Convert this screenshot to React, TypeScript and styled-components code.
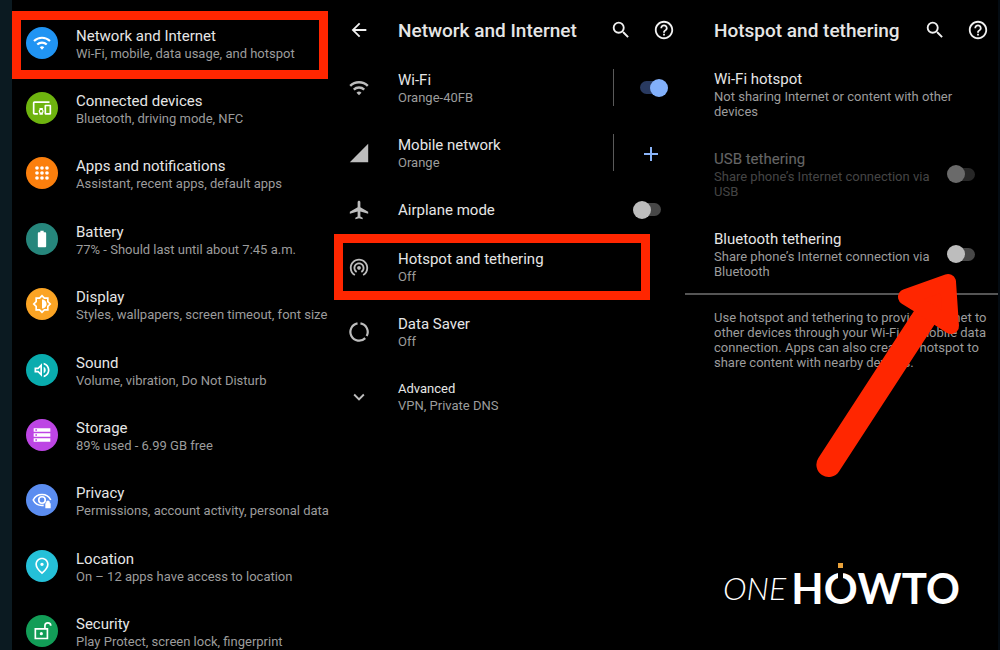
import React from "react";
import styled, { createGlobalStyle, css } from "styled-components";
import {
  MdAdd,
  MdArrowBack,
  MdBatteryFull,
  MdHelpOutline,
  MdKeyboardArrowDown,
  MdLocalAirport,
  MdOutlineBrightness6,
  MdOutlineDevicesOther,
  MdOutlinePlace,
  MdOutlineVolumeUp,
  MdSearch,
  MdSignalCellular4Bar,
  MdStorage,
  MdWifiTethering,
} from "react-icons/md";

const red = "#ff2600";

const GlobalStyle = createGlobalStyle`
  *, *::before, *::after { box-sizing: border-box; }
  body {
    margin: 0;
    background: #000;
    color: #e6e6e6;
    font-family: Roboto, "Liberation Sans", sans-serif;
  }
  h1, h2, p, ul { margin: 0; padding: 0; }
  ul { list-style: none; }
`;

const Page = styled.main`
  display: grid;
  grid-template-columns: 334fr 351fr 315fr;
  height: 100vh;
  overflow: hidden;
`;

const Panel = styled.section`
  position: relative;
  min-width: 0;
`;

const SettingsPanel = styled(Panel)`
  border-left: 12px solid #0b1a21;
  padding-top: 10px;
`;

const DetailPanel = styled(Panel)`
  display: flex;
  flex-direction: column;
  border-right: 2px solid #030b12;
`;

const SettingsList = styled.ul`
  display: grid;
  grid-auto-rows: 1fr;
  min-height: calc(100vh + 4px);
`;

const SettingsItem = styled.li`
  position: relative;
  display: flex;
`;

const Badge = styled.span<{ $color: string }>`
  flex: none;
  display: grid;
  place-items: center;
  width: 32px;
  height: 32px;
  border-radius: 50%;
  background: ${(p) => p.$color};
  color: #fff;
  font-size: 20px;
`;

const Copy = styled.span`
  flex: 1;
  min-width: 0;
  display: block;
`;

const SettingsLink = styled.a`
  flex: 1;
  display: flex;
  align-items: center;
  gap: 18px;
  padding-left: 14px;
  color: inherit;
  text-decoration: none;

  ${Copy} { padding-top: 2px; }
`;

const titleText = css`
  display: block;
  font-size: 15px;
  line-height: 20px;
`;

const Title = styled.span`
  ${titleText}
`;

const SmallTitle = styled(Title)`
  font-size: 13px;
  line-height: 18px;
`;

const TitleLabel = styled.label`
  ${titleText}
`;

const Summary = styled.span`
  display: block;
  color: #9c9c9c;
  font-size: 13px;
  line-height: 16px;
  white-space: nowrap;
`;

const WrappedSummary = styled(Summary)`
  line-height: 15px;
  white-space: normal;
`;

const Highlight = styled.span<{ $wide?: boolean }>`
  position: absolute;
  inset: ${(p) => (p.$wide ? "1px 6px -4px 0" : "0 35px -1px 0")};
  border: 9px solid ${red};
  pointer-events: none;
`;

const Bar = styled.header`
  display: flex;
  align-items: center;
  height: 60px;
  padding-right: 10px;
`;

const BarTitle = styled.h1`
  flex: 1;
  padding-top: 2px;
  font-size: 19px;
  line-height: 24px;
  font-weight: 500;
  white-space: nowrap;
`;

const IconButton = styled.button`
  flex: none;
  display: grid;
  place-items: center;
  width: 22px;
  height: 22px;
  padding: 0;
  border: 0;
  background: none;
  color: #f1f1f1;
  font-size: 22px;
`;

const BarActions = styled.div`
  display: flex;
  gap: 21px;
`;

const BackSlot = styled.div`
  width: 64px;
  padding-left: 14px;
`;

const NetworkList = styled.ul`
  margin-top: -5px;
`;

const Row = styled.li<{ $compact?: boolean }>`
  position: relative;
  display: flex;
  align-items: center;
  height: ${(p) => (p.$compact ? 49 : 65)}px;
`;

const RowIcon = styled.span`
  flex: none;
  display: flex;
  width: 64px;
  padding-left: 14px;
  color: #bdbdbd;
  font-size: 22px;
`;

const Side = styled.span<{ $divided?: boolean }>`
  flex: none;
  display: flex;
  align-items: center;
  width: 72px;
  height: 37px;
  padding-left: ${(p) => (p.$divided ? 25 : 19)}px;
  border-left: 1px solid ${(p) => (p.$divided ? "#5a5a5a" : "transparent")};
`;

const AddButton = styled(IconButton)`
  color: #8ab4f8;
  font-size: 24px;
`;

const Track = styled.span<{ $on?: boolean }>`
  position: relative;
  flex: none;
  display: flex;
  align-items: center;
  width: 29px;
  height: 18px;

  &::before {
    content: "";
    flex: 1;
    height: 13px;
    margin: 0 1px;
    border-radius: 7px;
    background: ${(p) => (p.$on ? "#293a60" : "#474747")};
  }
`;

const Switch = styled.input`
  appearance: none;
  position: absolute;
  inset: 0;
  display: flex;
  margin: 0;

  &::before {
    content: "";
    width: 18px;
    height: 18px;
    border-radius: 50%;
    background: #bdbdbd;
  }
  &:checked { justify-content: flex-end; }
  &:checked::before { background: #82b0fb; }
`;

const Option = styled.li<{ $disabled?: boolean }>`
  display: flex;
  align-items: center;
  min-height: 80px;
  padding: 0 22px 0 29px;

  ${(p) =>
    p.$disabled &&
    css`
      ${Copy} { opacity: 0.44; }
      ${Track} { opacity: 0.56; }
    `}
`;

const OptionList = styled.ul`
  margin-top: -6px;
`;

const OptionBar = styled(Bar)`
  padding-right: 9px;
  padding-left: 29px;
`;

const Note = styled.p`
  margin-top: -1px;
  padding: 15px 8px 0 29px;
  border-top: 2px solid #555;
  color: #9c9c9c;
  font-size: 13px;
  line-height: 15px;
`;

const Arrow = styled.svg`
  position: absolute;
  top: 270px;
  right: 36px;
  width: 148px;
  height: 212px;
  pointer-events: none;
`;

const Logo = styled.div`
  display: flex;
  align-items: center;
  gap: 5px;
  margin-top: auto;
  padding: 0 0 48px 38px;
  color: #fff;
  font-family: Lato, sans-serif;
  line-height: 56px;
  white-space: nowrap;
`;

const LogoLight = styled.span`
  font-size: 32px;
  font-style: italic;
  font-weight: 300;
`;

const LogoBold = styled.span`
  font-size: 42px;
  font-weight: 700;
`;

const PowerO = styled.span`
  position: relative;

  &::before, &::after {
    content: "";
    position: absolute;
    left: 50%;
    width: 5px;
    margin-left: -3px;
  }
  &::before {
    top: 9px;
    height: 9px;
    background: #000;
  }
  &::after {
    top: 0;
    height: 5px;
    background: #e9a23b;
  }
`;

const glyph = {
  width: "1em",
  height: "1em",
  viewBox: "0 0 24 24",
  fill: "none",
  stroke: "currentColor",
  strokeWidth: 2,
} as const;

const WifiIcon = () => (
  <svg {...glyph} strokeWidth={2.6}>
    <path d="M2.400 9.600a13.800 13.800 0 0 1 19.200 0M6.300 13.800a8.200 8.200 0 0 1 11.400 0" />
    <path d="M9.300 17.200a3.800 3.800 0 0 1 5.400 0l-2.700 2.800z" fill="currentColor" stroke="none" />
  </svg>
);

const DotsIcon = () => (
  <svg {...glyph} fill="currentColor" stroke="none">
    {[6, 12, 18].map((y) => [6, 12, 18].map((x) => <circle key={`${x}-${y}`} cx={x} cy={y} r="2.2" />))}
  </svg>
);

const PrivacyIcon = () => (
  <svg {...glyph}>
    <path d="M14 18.400c-.7.1-1.300.2-2 .2-4.600 0-8.600-2.700-10.500-6.600C3.400 8.100 7.400 5.400 12 5.400s8.600 2.700 10.500 6.600" />
    <circle cx="12" cy="12" r="3.900" />
    <path d="M16 16h1v-1.200a2.200 2.200 0 0 1 4.400 0V16h1v6H16z" fill="currentColor" stroke="none" />
  </svg>
);

const UnlockIcon = () => (
  <svg {...glyph}>
    <path d="M4 9.500h14.500v11.500H4zM15.500 9.500V5.800a3.500 3.500 0 0 1 7 0" />
    <circle cx="11.200" cy="15.200" r="1.900" fill="currentColor" stroke="none" />
  </svg>
);

const DataSaverIcon = () => (
  <svg {...glyph} strokeWidth={2.4}>
    <path d="M13.600 2.600a9.500 9.500 0 0 1 6.800 13.800M18.800 18.700A9.500 9.500 0 1 1 10.400 2.600" />
  </svg>
);

const settings = [
  { title: "Network and Internet", summary: "Wi-Fi, mobile, data usage, and hotspot", color: "#2094f3", icon: <WifiIcon />, marked: true },
  { title: "Connected devices", summary: "Bluetooth, driving mode, NFC", color: "#6eb40f", icon: <MdOutlineDevicesOther /> },
  { title: "Apps and notifications", summary: "Assistant, recent apps, default apps", color: "#fb7f0d", icon: <DotsIcon /> },
  { title: "Battery", summary: "77% - Should last until about 7:45 a.m.", color: "#26867c", icon: <MdBatteryFull /> },
  { title: "Display", summary: "Styles, wallpapers, screen timeout, font size", color: "#fba424", icon: <MdOutlineBrightness6 /> },
  { title: "Sound", summary: "Volume, vibration, Do Not Disturb", color: "#09acae", icon: <MdOutlineVolumeUp /> },
  { title: "Storage", summary: "89% used - 6.99 GB free", color: "#bd45e4", icon: <MdStorage /> },
  { title: "Privacy", summary: "Permissions, account activity, personal data", color: "#5b8df0", icon: <PrivacyIcon /> },
  { title: "Location", summary: "On – 12 apps have access to location", color: "#25c0d8", icon: <MdOutlinePlace /> },
  { title: "Security", summary: "Play Protect, screen lock, fingerprint", color: "#129d57", icon: <UnlockIcon /> },
];

const Toggle = ({ id, on, disabled }: { id: string; on?: boolean; disabled?: boolean }) => (
  <Track $on={on}>
    <Switch type="checkbox" id={id} defaultChecked={on} disabled={disabled} />
  </Track>
);

const Actions = () => (
  <BarActions>
    <IconButton aria-label="Search"><MdSearch /></IconButton>
    <IconButton aria-label="Help"><MdHelpOutline /></IconButton>
  </BarActions>
);

export default function App() {
  return (
    <>
      <GlobalStyle />
      <Page>
        <SettingsPanel>
          <SettingsList>
            {settings.map((s) => (
              <SettingsItem key={s.title}>
                <SettingsLink href="#">
                  <Badge $color={s.color}>{s.icon}</Badge>
                  <Copy>
                    <Title>{s.title}</Title>
                    <Summary>{s.summary}</Summary>
                  </Copy>
                </SettingsLink>
                {s.marked && <Highlight $wide />}
              </SettingsItem>
            ))}
          </SettingsList>
        </SettingsPanel>

        <Panel>
          <Bar>
            <BackSlot>
              <IconButton aria-label="Back"><MdArrowBack /></IconButton>
            </BackSlot>
            <BarTitle>Network and Internet</BarTitle>
            <Actions />
          </Bar>
          <NetworkList>
            <Row>
              <RowIcon><WifiIcon /></RowIcon>
              <Copy>
                <TitleLabel htmlFor="wifi">Wi-Fi</TitleLabel>
                <Summary>Orange-40FB</Summary>
              </Copy>
              <Side $divided><Toggle id="wifi" on /></Side>
            </Row>
            <Row>
              <RowIcon><MdSignalCellular4Bar /></RowIcon>
              <Copy>
                <Title>Mobile network</Title>
                <Summary>Orange</Summary>
              </Copy>
              <Side $divided>
                <AddButton aria-label="Add network"><MdAdd /></AddButton>
              </Side>
            </Row>
            <Row $compact>
              <RowIcon><MdLocalAirport /></RowIcon>
              <Copy>
                <TitleLabel htmlFor="airplane">Airplane mode</TitleLabel>
              </Copy>
              <Side><Toggle id="airplane" /></Side>
            </Row>
            <Row>
              <RowIcon><MdWifiTethering /></RowIcon>
              <Copy>
                <Title>Hotspot and tethering</Title>
                <Summary>Off</Summary>
              </Copy>
              <Highlight />
            </Row>
            <Row>
              <RowIcon><DataSaverIcon /></RowIcon>
              <Copy>
                <Title>Data Saver</Title>
                <Summary>Off</Summary>
              </Copy>
            </Row>
            <Row>
              <RowIcon><MdKeyboardArrowDown /></RowIcon>
              <Copy>
                <SmallTitle>Advanced</SmallTitle>
                <Summary>VPN, Private DNS</Summary>
              </Copy>
            </Row>
          </NetworkList>
        </Panel>

        <DetailPanel>
          <OptionBar>
            <BarTitle>Hotspot and tethering</BarTitle>
            <Actions />
          </OptionBar>
          <OptionList>
            <Option>
              <Copy>
                <Title>Wi-Fi hotspot</Title>
                <WrappedSummary>Not sharing Internet or content with other devices</WrappedSummary>
              </Copy>
            </Option>
            <Option $disabled>
              <Copy>
                <TitleLabel htmlFor="usb">USB tethering</TitleLabel>
                <WrappedSummary>Share phone’s Internet connection via USB</WrappedSummary>
              </Copy>
              <Toggle id="usb" disabled />
            </Option>
            <Option>
              <Copy>
                <TitleLabel htmlFor="bluetooth">Bluetooth tethering</TitleLabel>
                <WrappedSummary>Share phone’s Internet connection via Bluetooth</WrappedSummary>
              </Copy>
              <Toggle id="bluetooth" />
            </Option>
          </OptionList>
          <Note>
            Use hotspot and tethering to provide Internet to other devices through your Wi-Fi or mobile data
            connection. Apps can also create a hotspot to share content with nearby devices.
          </Note>
          <Logo>
            <LogoLight>ONE</LogoLight>
            <LogoBold>H<PowerO>O</PowerO>WTO</LogoBold>
          </Logo>
          <Arrow viewBox="814 270 148 212" stroke={red} strokeLinejoin="round" strokeLinecap="round">
            <path d="M828.700 464.700L924.300 317.800" strokeWidth="24.600" />
            <path d="M906 297L948 282L951 326L934 315L919 305Z" fill={red} strokeWidth="16" />
          </Arrow>
        </DetailPanel>
      </Page>
    </>
  );
}
